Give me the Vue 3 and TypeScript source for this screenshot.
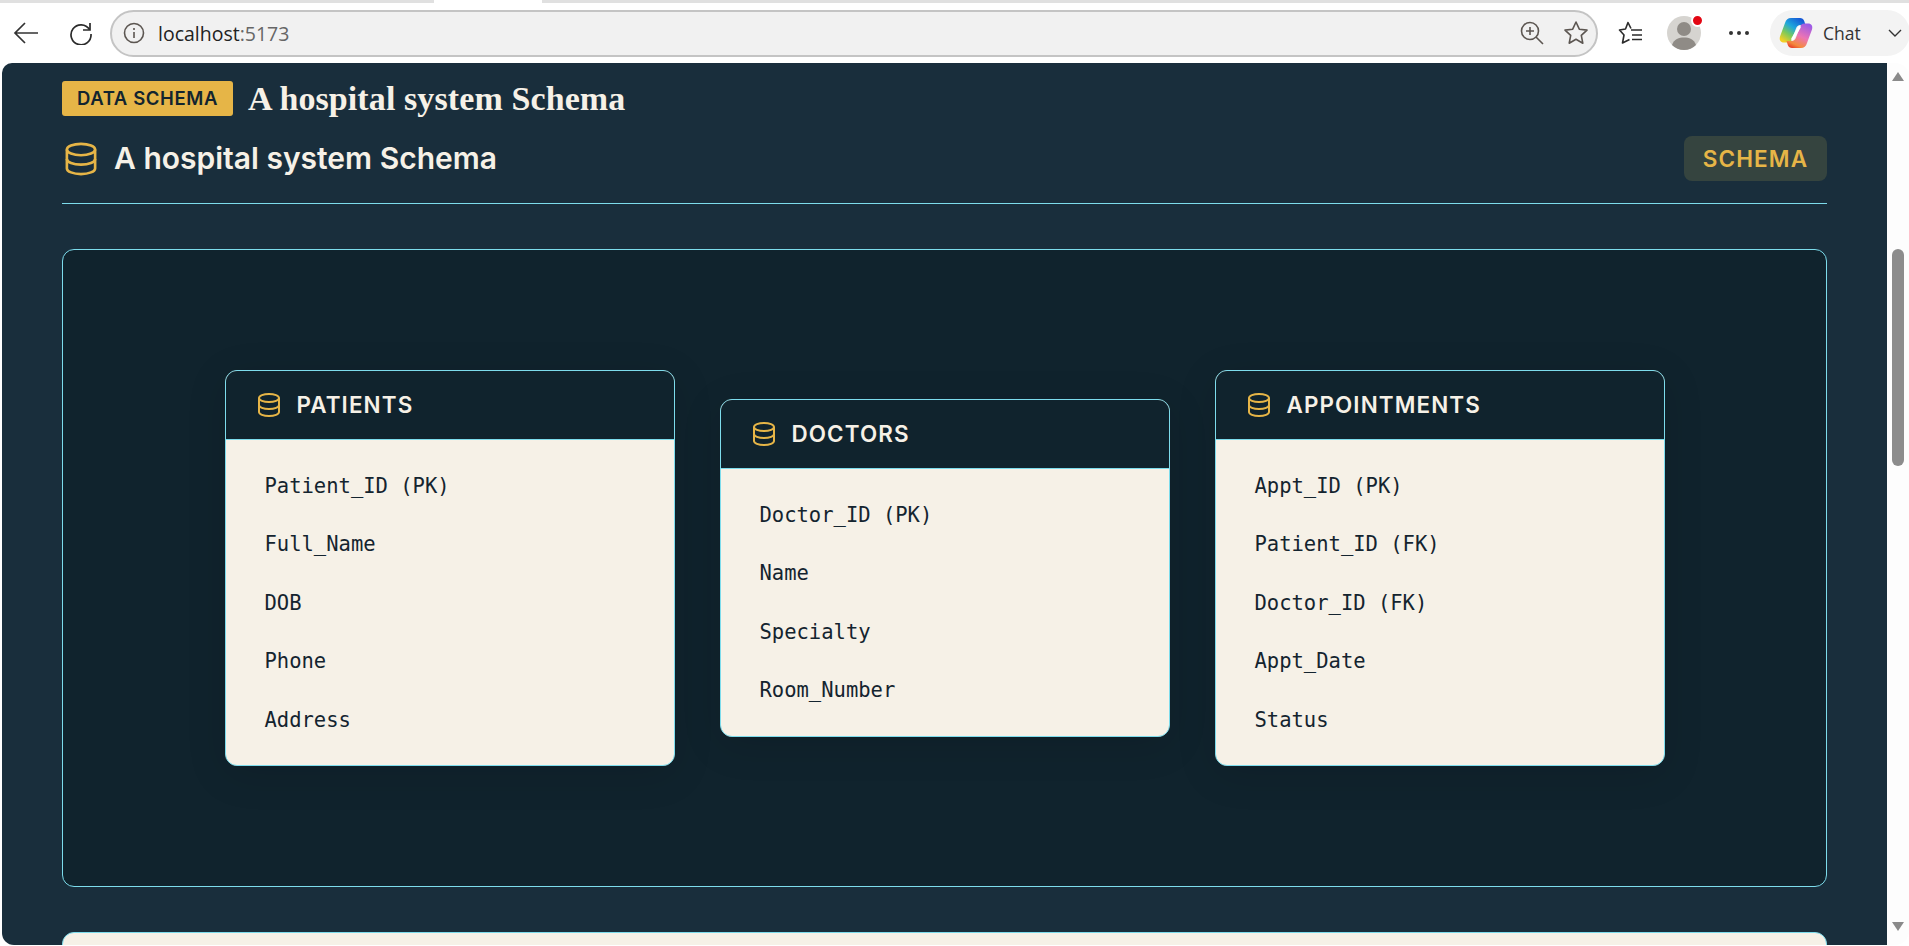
<script setup lang="ts">
interface Table {
  name: string
  fields: string[]
}

const tables: Table[] = [
  { name: 'PATIENTS', fields: ['Patient_ID (PK)', 'Full_Name', 'DOB', 'Phone', 'Address'] },
  { name: 'DOCTORS', fields: ['Doctor_ID (PK)', 'Name', 'Specialty', 'Room_Number'] },
  { name: 'APPOINTMENTS', fields: ['Appt_ID (PK)', 'Patient_ID (FK)', 'Doctor_ID (FK)', 'Appt_Date', 'Status'] },
]
</script>

<template>
  <div class="browser">
    <div class="tabstrip">
      <span class="strip-left"></span>
      <span class="strip-right"></span>
    </div>

    <div class="toolbar">
      <svg class="tb-back" width="26" height="24" viewBox="0 0 26 24" fill="none" stroke="#333" stroke-width="1.7">
        <path d="M25 12H2M12 2 2 12l10 10" />
      </svg>
      <svg class="tb-reload" width="24" height="24" viewBox="0 0 24 24" fill="none" stroke="#2b2b2b" stroke-width="1.7">
        <path d="M20.500 8.500A10 10 0 1 0 22 13" />
        <path d="M21 2v7h-7" />
      </svg>
      <div class="address">
        <svg width="22" height="22" viewBox="0 0 22 22" fill="none" stroke="#5c5651" stroke-width="1.6">
          <circle cx="11" cy="11" r="9.500" />
          <path d="M11 10v6M11 6v2" />
        </svg>
        <span class="url">localhost<span class="port">:5173</span></span>
        <span class="grow"></span>
        <svg class="zoom-icon" width="24" height="24" viewBox="0 0 24 24" fill="none" stroke="#5c5651" stroke-width="1.6">
          <circle cx="10" cy="10" r="8.500" />
          <path d="M16 16l7 7M10 6v8M6 10h8" />
        </svg>
        <svg class="star-icon" width="26" height="26" viewBox="0 0 26 26" fill="none" stroke="#5c5651" stroke-width="1.6" stroke-linejoin="round">
          <path d="M13 2l3.300 7.200 7.700.9-5.700 5.300 1.500 7.800L13 19.300l-6.800 3.900 1.500-7.800L2 10.100l7.700-.9z" />
        </svg>
      </div>
      <svg class="tb-favs" width="26" height="24" viewBox="0 0 26 24" fill="none" stroke="#2b2b2b" stroke-width="1.6" stroke-linejoin="round">
        <path d="M13 7.500 10 1.500 7.500 8 1.500 9l4.500 5-1.500 8 7-3.500" />
        <path d="M13 9h11M14 14h10M14 18.500h10" />
      </svg>
      <div class="avatar">
        <svg width="34" height="34" viewBox="0 0 34 34">
          <circle cx="17" cy="17" r="17" fill="#d6d4d0" />
          <circle cx="17" cy="13" r="7" fill="#8f8b86" />
          <path d="M5 29c2-6 7-7.500 12-7.500S27 23 29 29a17 17 0 0 1-24 0z" fill="#8f8b86" />
        </svg>
        <span class="dot"></span>
      </div>
      <div class="more"><i></i><i></i><i></i></div>
      <div class="chat">
        <svg class="copilot" width="34" height="32" viewBox="0 0 34 32">
          <defs>
            <linearGradient id="cpA" x1="0.1" y1="0.9" x2="0.75" y2="0">
              <stop offset="0" stop-color="#f2d024" />
              <stop offset="0.3" stop-color="#7cc95a" />
              <stop offset="0.6" stop-color="#1fa8dc" />
              <stop offset="1" stop-color="#1558d6" />
            </linearGradient>
            <linearGradient id="cpB" x1="0.75" y1="0" x2="0.25" y2="1">
              <stop offset="0" stop-color="#9c5ae6" />
              <stop offset="0.5" stop-color="#ec74b4" />
              <stop offset="0.85" stop-color="#f48a3c" />
              <stop offset="1" stop-color="#e8452c" />
            </linearGradient>
          </defs>
          <path d="M12 1h9c2 0 3.600 1.200 4.200 3l1.300 4h-5c-2.200 0-3.800 1.300-4.500 3.500L13 22c-.7 2.300-2 3.500-4.500 3.500H5C1.500 25.500 0 23 1 19.500L6 6C7 2.800 9 1 12 1z" fill="url(#cpA)" />
          <path d="M22 31h-9c-2 0-3.600-1.200-4.200-3L7.500 24h5c2.200 0 3.800-1.300 4.500-3.500L21 10c.7-2.300 2-3.500 4.500-3.500H29c3.500 0 5 2.500 4 6L28 26c-1 3.200-3 5-6 5z" fill="url(#cpB)" />
          <path d="M20.500 10 13.500 22" stroke="#fff" stroke-width="2.600" stroke-linecap="round" />
        </svg>
        <span class="chat-label">Chat</span>
        <svg class="chevron" width="14" height="8" viewBox="0 0 14 8" fill="none" stroke="#333" stroke-width="1.4">
          <path d="M1 1l6 6 6-6" />
        </svg>
      </div>
    </div>

    <div class="viewport">
      <main class="page">
        <div class="title-row">
          <span class="badge">DATA SCHEMA</span>
          <h1>A hospital system Schema</h1>
        </div>

        <div class="section-head">
          <svg class="db-large" width="32" height="34" viewBox="0 0 34 35" fill="none" stroke="#e6b547" stroke-width="2.800">
            <ellipse cx="17" cy="7.500" rx="15" ry="6" />
            <path d="M2 7.500v20c0 3.300 6.700 6 15 6s15-2.700 15-6v-20" />
            <path d="M2 17.500c0 3.300 6.700 6 15 6s15-2.700 15-6" />
          </svg>
          <h2>A hospital system Schema</h2>
          <span class="pill">SCHEMA</span>
        </div>

        <section class="diagram">
          <article v-for="table in tables" :key="table.name" class="table-card">
            <header>
              <svg width="22" height="24" viewBox="0 0 22 24" fill="none" stroke="#e6b547" stroke-width="2">
                <ellipse cx="11" cy="5" rx="10" ry="4" />
                <path d="M1 5v14c0 2.200 4.500 4 10 4s10-1.800 10-4V5" />
                <path d="M1 12c0 2.200 4.500 4 10 4s10-1.800 10-4" />
              </svg>
              <span>{{ table.name }}</span>
            </header>
            <ul>
              <li v-for="field in table.fields" :key="field">{{ field }}</li>
            </ul>
          </article>
        </section>

        <section class="next-card"></section>
      </main>

      <aside class="scrollbar">
        <span class="arrow up"></span>
        <span class="thumb"></span>
        <span class="arrow down"></span>
      </aside>
    </div>
  </div>
</template>

<style>
html, body { margin: 0; background: #fff; overflow: hidden; }
</style>

<style scoped>
.browser { width: 1909px; height: 946px; display: flex; flex-direction: column; overflow: hidden; background: #fff; }

.tabstrip { height: 3px; flex: none; display: flex; background: #fff; }
.strip-left { width: 434px; background: #e0e0e0; }
.strip-right { margin-left: 108px; flex: 1; background: #e0e0e0; }

.toolbar { height: 60px; flex: none; display: flex; align-items: center; padding-left: 13px; }
.toolbar > * { flex: none; }
.tb-reload { margin-left: 30px; }
.address { width: 1488px; height: 47px; box-sizing: border-box; margin-left: 17px; display: flex; align-items: center; padding: 0 7px 0 11px; background: #f1f1f1; border: 2px solid #c4c4c4; border-radius: 24px; }
.url { margin-left: 13px; font: 400 19.500px "Open Sans", sans-serif; color: #222; }
.port { color: #666; }
.grow { flex: 1; }
.star-icon { margin-left: 19px; }
.tb-favs { margin-left: 20px; }
.avatar { position: relative; margin-left: 23px; width: 34px; height: 34px; }
.avatar svg { display: block; }
.dot { position: absolute; top: -2px; right: -3px; width: 9px; height: 9px; background: #e30613; border-radius: 50%; border: 2px solid #fff; }
.more { margin-left: 28px; display: flex; gap: 4px; }
.more i { width: 4px; height: 4px; border-radius: 50%; background: #333; }
.chat { margin-left: 21px; width: 140px; height: 46px; box-sizing: border-box; display: flex; align-items: center; padding-left: 9px; background: #f3f3f3; border-radius: 23px; }
.copilot { flex: none; }
.chat-label { margin-left: 10px; width: 37px; font: 400 17.500px "Open Sans", sans-serif; color: #333; }
.chevron { margin-left: 28px; flex: none; }

.viewport { flex: 1; min-height: 0; display: flex; padding-left: 2px; }
.page { width: 1885px; box-sizing: border-box; padding: 18px 60px 0; background: #192e3c; border-radius: 10px 0 0 12px; overflow: hidden; margin-bottom: 1px; }

.title-row { display: flex; align-items: center; gap: 15px; height: 35px; }
.badge { width: 171px; height: 35px; box-sizing: border-box; padding-bottom: 1px; display: flex; align-items: center; justify-content: center; background: #e6b547; border-radius: 3px; font: 600 18.500px Inter, sans-serif; letter-spacing: 0.6px; color: #12242f; white-space: nowrap; }
h1 { margin: 0; font: 700 34px "Liberation Serif", serif; letter-spacing: 0.1px; color: #f6f1e7; white-space: nowrap; }

.section-head { margin-top: 20px; height: 45px; padding-bottom: 22px; border-bottom: 1px solid #7ddcec; display: flex; align-items: center; }
.db-large { margin-left: 3px; }
h2 { margin: 0 0 1px 17px; flex: 1; font: 600 30px Inter, sans-serif; color: #f6f1e7; white-space: nowrap; }
.pill { width: 143px; height: 45px; display: flex; align-items: center; justify-content: center; background: #35443f; border-radius: 8px; font: 600 22.500px Inter, sans-serif; letter-spacing: 1.100px; color: #e6b547; }

.diagram { margin-top: 45px; height: 638px; box-sizing: border-box; display: flex; align-items: center; justify-content: center; gap: 45px; background: #10232d; border: 1px solid #7ddcec; border-radius: 12px; }

.table-card { width: 450px; box-sizing: border-box; border: 1px solid #7ddcec; border-radius: 12px; overflow: hidden; background: #f6f1e7; box-shadow: 0 8px 40px rgba(0, 0, 0, 0.12); }
.table-card header { height: 69px; box-sizing: border-box; padding-bottom: 1px; display: flex; align-items: center; padding-left: 32px; background: #10232d; border-bottom: 1px solid #7ddcec; font: 600 22.400px Inter, sans-serif; letter-spacing: 1.120px; color: #f6f1e7; }
.table-card header span { margin-left: 17px; }
.table-card ul { list-style: none; margin: 0; padding: 16.500px 39px 16px; }
.table-card li { height: 58.500px; font: 400 20.500px/58px "DejaVu Sans Mono", monospace; color: #14242f; }

.next-card { margin-top: 45px; height: 60px; background: #f6f1e7; border: 1px solid #7ddcec; border-radius: 12px; }

.scrollbar { flex: 1; display: flex; flex-direction: column; align-items: center; background: #fdfdfd; border-radius: 0 14px 14px 0; margin-bottom: 1px; }
.arrow { width: 0; height: 0; border-left: 6px solid transparent; border-right: 6px solid transparent; }
.arrow.up { margin-top: 9px; border-bottom: 9px solid #8a8a8a; }
.arrow.down { margin-top: 456px; border-top: 9px solid #8a8a8a; }
.thumb { margin-top: 168px; width: 12px; height: 217px; border-radius: 6px; background: #8c8c8c; }
</style>
